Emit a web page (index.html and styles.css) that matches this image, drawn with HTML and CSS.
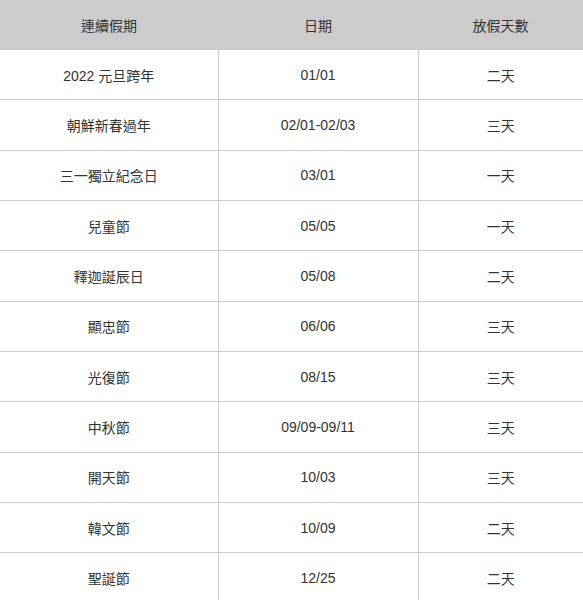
FILE: index.html
```html
<!DOCTYPE html>
<html lang="zh-Hant">
<head>
<meta charset="utf-8">
<link rel="stylesheet" href="styles.css">
</head>
<body>
<table class="holidays">
  <colgroup>
    <col class="c1"><col class="c2"><col class="c3">
  </colgroup>
  <thead>
    <tr><th>連續假期</th><th>日期</th><th>放假天數</th></tr>
  </thead>
  <tbody>
    <tr><td>2022 元旦跨年</td><td>01/01</td><td>二天</td></tr>
    <tr><td>朝鮮新春過年</td><td>02/01-02/03</td><td>三天</td></tr>
    <tr><td>三一獨立紀念日</td><td>03/01</td><td>一天</td></tr>
    <tr><td>兒童節</td><td>05/05</td><td>一天</td></tr>
    <tr><td>釋迦誕辰日</td><td>05/08</td><td>二天</td></tr>
    <tr><td>顯忠節</td><td>06/06</td><td>三天</td></tr>
    <tr><td>光復節</td><td>08/15</td><td>三天</td></tr>
    <tr><td>中秋節</td><td>09/09-09/11</td><td>三天</td></tr>
    <tr><td>開天節</td><td>10/03</td><td>三天</td></tr>
    <tr><td>韓文節</td><td>10/09</td><td>二天</td></tr>
    <tr><td>聖誕節</td><td>12/25</td><td>二天</td></tr>
  </tbody>
</table>
</body>
</html>
```

FILE: styles.css
```css
html, body {
  margin: 0;
  padding: 0;
  background: #ffffff;
}

body {
  font-family: "Liberation Sans", "Noto Sans CJK TC", sans-serif;
  font-size: 14px;
  color: #333333;
}

.holidays {
  width: 583px;
  border-collapse: collapse;
  table-layout: fixed;
}

.holidays .c1 { width: 218px; }
.holidays .c2 { width: 200px; }
.holidays .c3 { width: 165px; }

.holidays th {
  height: 50px;
  padding: 0;
  background: #cccccc;
  font-weight: normal;
  text-align: center;
  vertical-align: middle;
}

.holidays td {
  height: 49.33px;
  padding: 0;
  text-align: center;
  vertical-align: middle;
  border-bottom: 1px solid #cccccc;
  border-left: 1px solid #cccccc;
}

.holidays td:first-child {
  border-left: none;
}

.holidays tr:last-child td {
  border-bottom: none;
}
```
